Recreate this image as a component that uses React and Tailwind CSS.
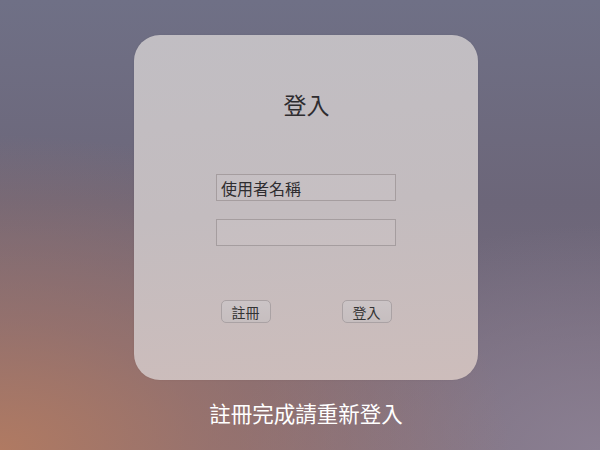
import React from "react";

export default function App() {
  const font = { fontFamily: '"Noto Sans CJK TC", "Noto Sans CJK SC", sans-serif' };
  return (
    <div
      style={font}
      className="w-[600px] h-[450px] overflow-hidden flex flex-col items-center pl-[12px] bg-[radial-gradient(ellipse_85%_70%_at_0%_100%,#b07a62_0%,rgba(170,118,100,0.6)_40%,rgba(170,118,100,0)_100%),radial-gradient(ellipse_60%_50%_at_100%_100%,#8a7f92_0%,rgba(138,127,146,0)_100%),linear-gradient(180deg,#6f7086_0%,#6c6679_45%,#7c6d7c_100%)]"
    >
      <div className="mt-[35px] w-[344px] h-[345px] rounded-[26px] bg-[linear-gradient(175deg,#c1bec3_0%,#c3bcbf_50%,#cdbdbb_100%)] shadow-[0_0_2px_rgba(0,0,0,0.08)] flex flex-col items-center">
        <div className="mt-[53px] h-[32px] leading-[32px] text-[23px] text-[#2e2c2f] pl-[1px]">登入</div>
        <div className="mt-[54px] w-[180px] h-[27px] border border-[#a59d9f] bg-white/5 flex items-center pl-[4px] text-[16px] text-[#2f2d30] leading-none">
          使用者名稱
        </div>
        <div className="mt-[18px] w-[180px] h-[27px] border border-[#a59d9f] bg-white/5" />
        <div className="mt-[54px] w-[171px] flex justify-between">
          <button className="w-[50px] h-[23px] rounded-[5px] border border-[#aaa2a4] bg-[linear-gradient(180deg,#cbc4c6_0%,#c6bebf_100%)] text-[14px] leading-none text-[#333] flex items-center justify-center">
            註冊
          </button>
          <button className="w-[50px] h-[23px] rounded-[5px] border border-[#aaa2a4] bg-[linear-gradient(180deg,#cbc4c6_0%,#c6bebf_100%)] text-[14px] leading-none text-[#333] flex items-center justify-center">
            登入
          </button>
        </div>
      </div>
      <div className="mt-[18px] h-[30px] leading-[30px] text-[21.5px] text-white">註冊完成請重新登入</div>
    </div>
  );
}
